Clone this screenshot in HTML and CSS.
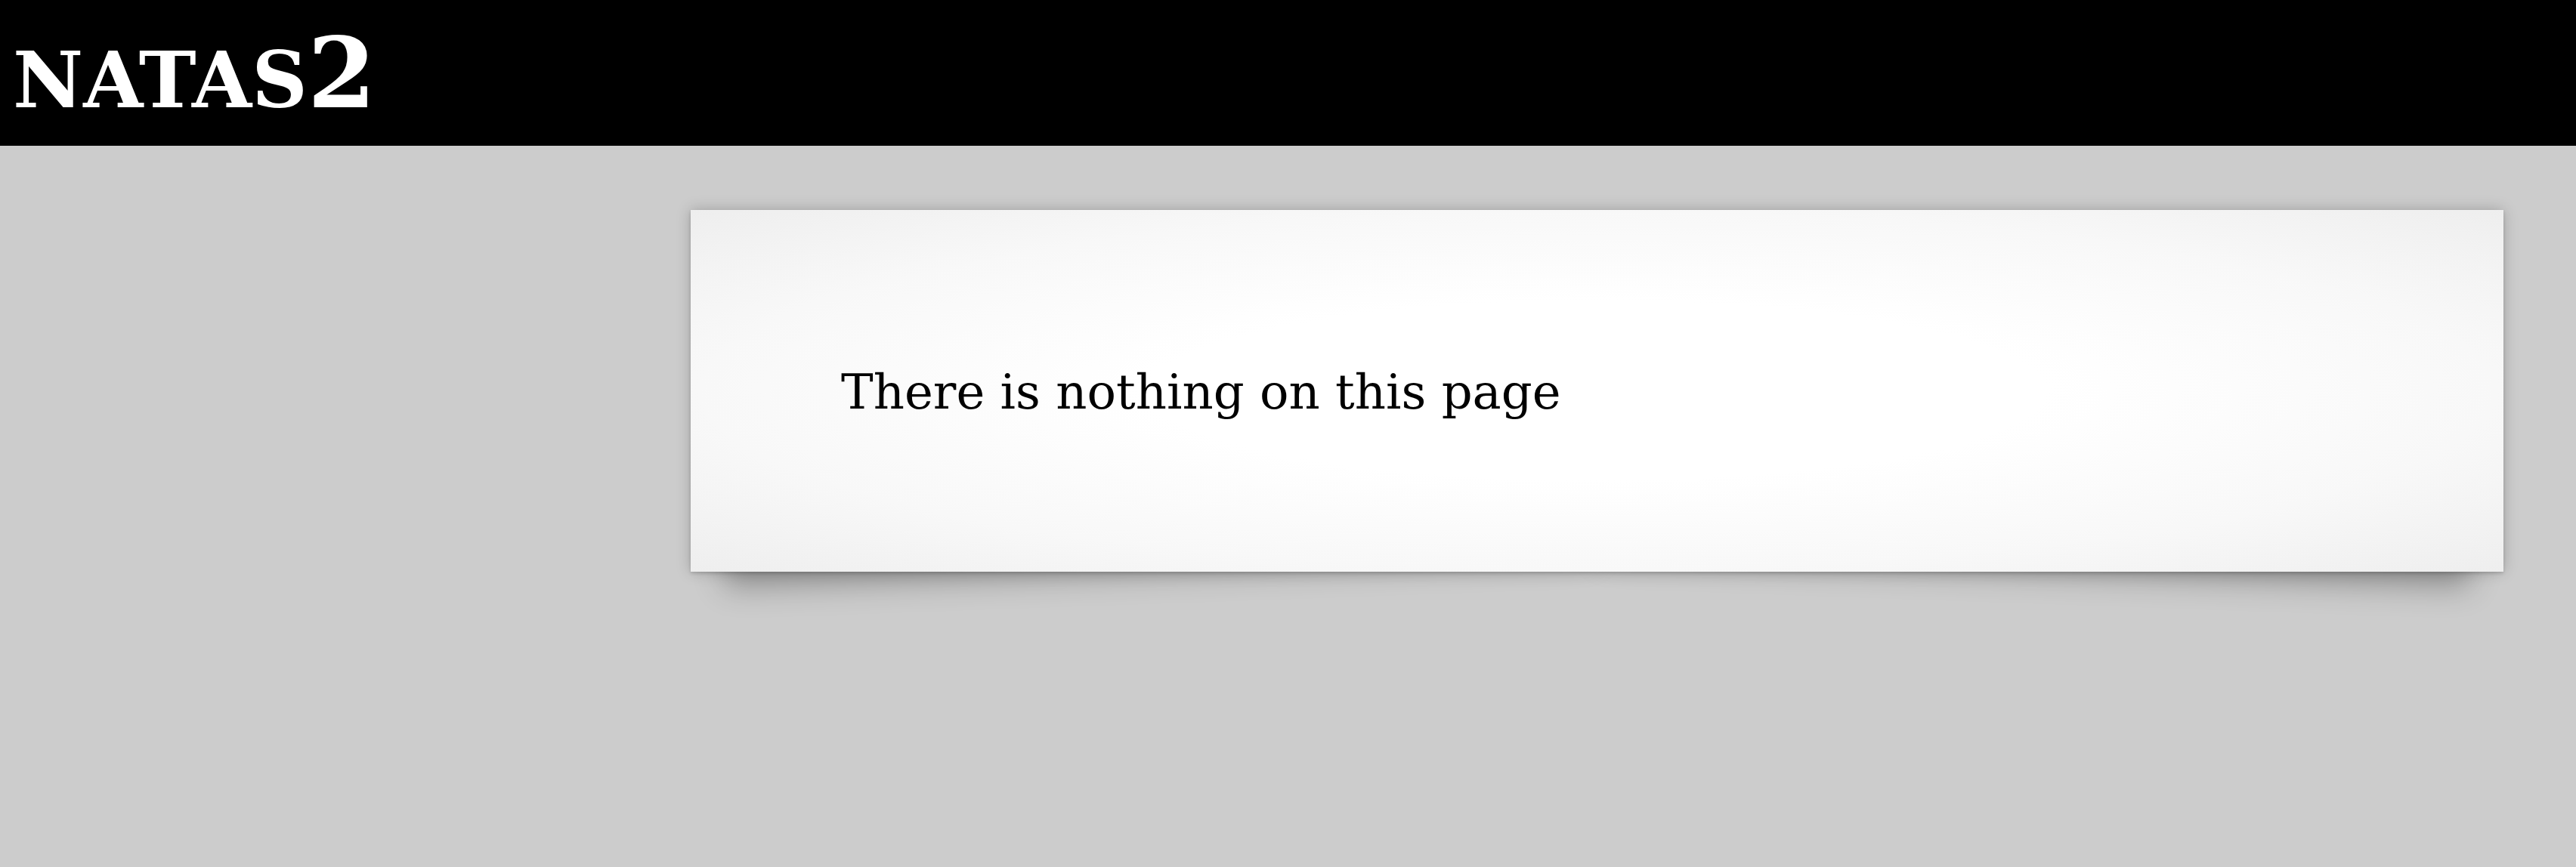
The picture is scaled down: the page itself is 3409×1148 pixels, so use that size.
FILE: index.html
```html
<!DOCTYPE html>
<html>
<head>
<meta charset="utf-8">
<title>natas2</title>
<link rel="stylesheet" href="styles.css">
</head>
<body>
<header class="hdr">
  <h1 class="title"><span class="caps">NATAS</span>2</h1>
</header>
<main class="main">
  <div class="card">
    <p class="msg">There is nothing on this page</p>
  </div>
</main>
</body>
</html>
```
FILE: styles.css
```css
html, body {
  margin: 0;
  padding: 0;
}
body {
  background: #ccc;
  font-family: "DejaVu Serif", serif;
  color: #000;
  min-height: 1148px;
}
.hdr {
  background: #000;
  color: #fff;
  height: 193px;
  box-sizing: border-box;
  padding: 32px 0 0 17px;
}
.title {
  margin: 0;
  font-size: 130px;
  line-height: 1;
  font-weight: bold;
}
.caps {
  font-size: 102px;
  line-height: 1;
}
.main {
  padding: 85px 96px 0 914px;
}
.card {
  position: relative;
  height: 479px;
  box-sizing: border-box;
  padding: 204px 0 0 199px;
  background: radial-gradient(ellipse at center, #fff 35%, #f8f8f8 70%, #eee 100%);
  box-shadow: 0 0 18px rgba(0,0,0,0.22), 0 2px 4px rgba(0,0,0,0.15);
}
.card::before,
.card::after {
  content: "";
  position: absolute;
  z-index: -1;
  bottom: 45px;
  width: 48%;
  height: 40%;
  box-shadow: 0 45px 40px rgba(0,0,0,0.3);
}
.card::before {
  left: 40px;
  transform: rotate(-2deg);
}
.card::after {
  right: 40px;
  transform: rotate(2deg);
}
.msg {
  margin: 0;
  font-size: 64px;
  line-height: 1.164;
}
```
